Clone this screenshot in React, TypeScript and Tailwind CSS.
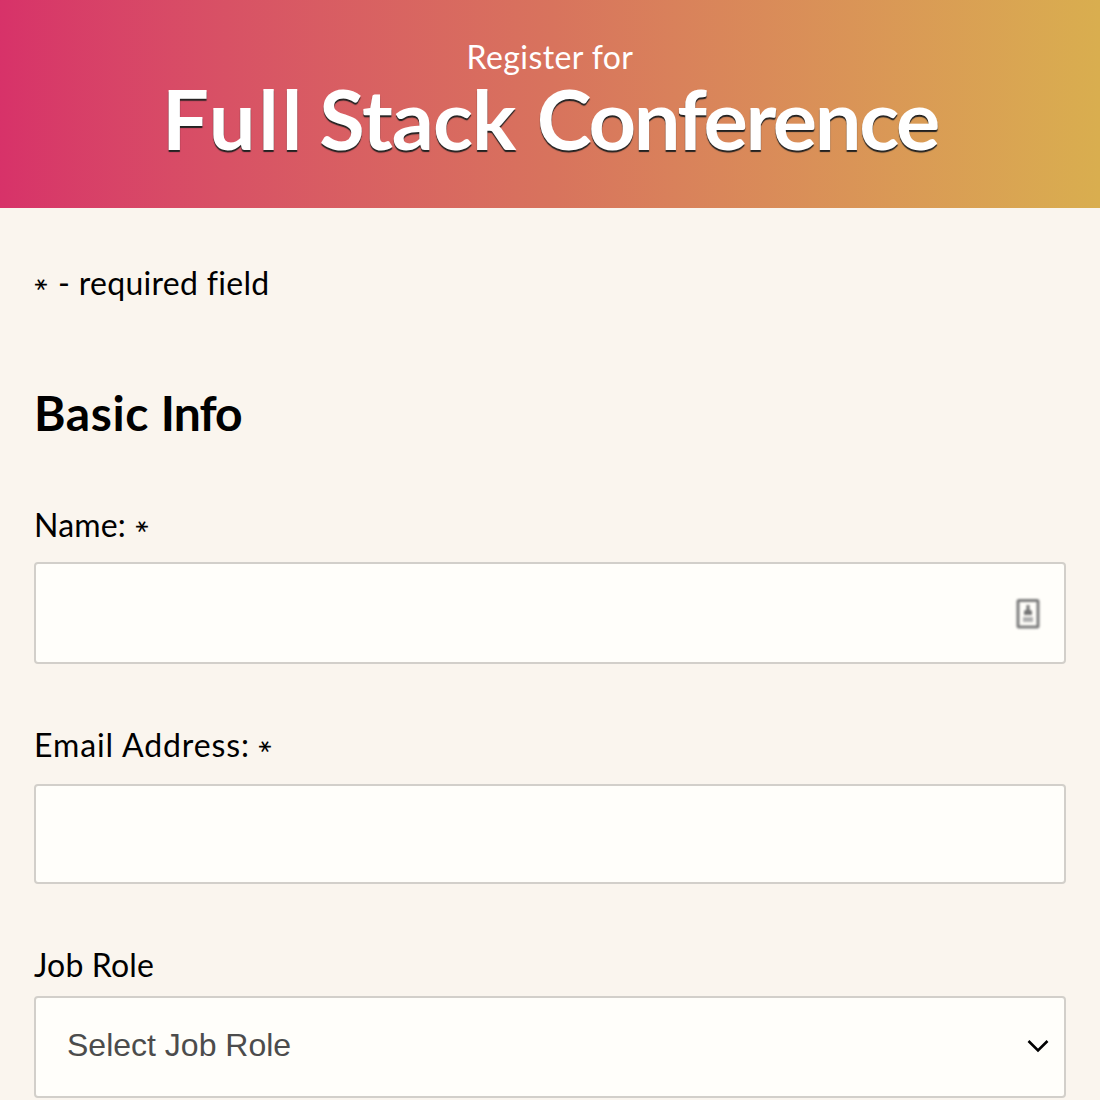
import React from "react";

function Required() {
  return (
    <span className="inline-block h-[14px] w-[14px] -translate-x-[8px] translate-y-[1px] rotate-90 text-center text-[36px] leading-[14px] tracking-normal">
      *
    </span>
  );
}

function ContactIcon() {
  return (
    <svg width="28" height="36" viewBox="0 0 28 36" className="translate-y-px blur-[0.8px]" fill="none">
      <rect x="4" y="4.5" width="20" height="26.5" rx="1" stroke="#7c7c7c" strokeWidth="3" />
      <path d="M12.5 9h3v4.500l2.500 1.500v4h-8v-4l2.500-1.500z" fill="#757575" />
      <rect x="9" y="21" width="10" height="5" fill="#b0b0b0" />
    </svg>
  );
}

export default function App() {
  return (
    <div className="h-[1100px] overflow-hidden bg-[#faf5ee] font-['Lato',sans-serif] text-[32px] leading-[44px] text-black">
      <header className="flex h-[208px] flex-col items-center bg-linear-to-r from-[#d73269] via-[#d8735d] to-[#d9ae4f] pt-[35px] text-white">
        <p className="whitespace-nowrap tracking-[0.4px]">Register for</p>
        <h1 className="-mt-[3px] whitespace-nowrap text-[83px] leading-[84px] font-bold tracking-[-0.95px] [text-shadow:0_2px_1px_#222]">
          <span className="tracking-[2.7px]">Full</span> <span className="-ml-[5px]">Stack</span>{" "}
          <span className="ml-[2px] tracking-[-2.4px]">Conference</span>
        </h1>
      </header>
      <main className="px-[34px]">
        <p className="mt-[53px] flex h-[44px] items-center whitespace-nowrap tracking-[0.3px]">
          <Required /> <span className="ml-[10px]">- required field</span>
        </p>
        <h2 className="mt-[78px] h-[60px] whitespace-nowrap text-[48px] leading-[60px] font-bold">
          <span className="tracking-[0.6px]">Basic</span> <span className="tracking-[-0.9px]">Info</span>
        </h2>
        <form>
          <label className="mt-[60px] flex h-[44px] items-center gap-[9px] whitespace-nowrap tracking-[0.2px]">
            Name: <Required />
          </label>
          <div className="mt-[15px] flex h-[102px] items-center justify-end rounded-[4px] border-2 border-[#d2cfca] bg-[#fffefa] pr-[22px]">
            <ContactIcon />
          </div>
          <label className="mt-[59px] flex h-[44px] items-center gap-[8px] whitespace-nowrap tracking-[0.9px]">
            Email Address: <Required />
          </label>
          <div className="mt-[17px] h-[100px] rounded-[4px] border-2 border-[#d2cfca] bg-[#fffefa]" />
          <label className="mt-[59px] block h-[44px] whitespace-nowrap tracking-[0.15px]">Job Role</label>
          <div className="mt-[9px] flex h-[102px] items-center justify-between rounded-[4px] border-2 border-[#d2cfca] bg-[#fffefa] pr-[14px] pl-[31px] font-['Liberation_Sans',sans-serif] text-[#4c4c4c]">
            <span className="-mt-1">Select Job Role</span>
            <svg width="24" height="16" viewBox="0 0 24 16" fill="none" className="-mt-0.5">
              <path d="M2.500 3l9.500 9.500L21.500 3" stroke="#000" strokeWidth="2.600" />
            </svg>
          </div>
        </form>
      </main>
    </div>
  );
}
